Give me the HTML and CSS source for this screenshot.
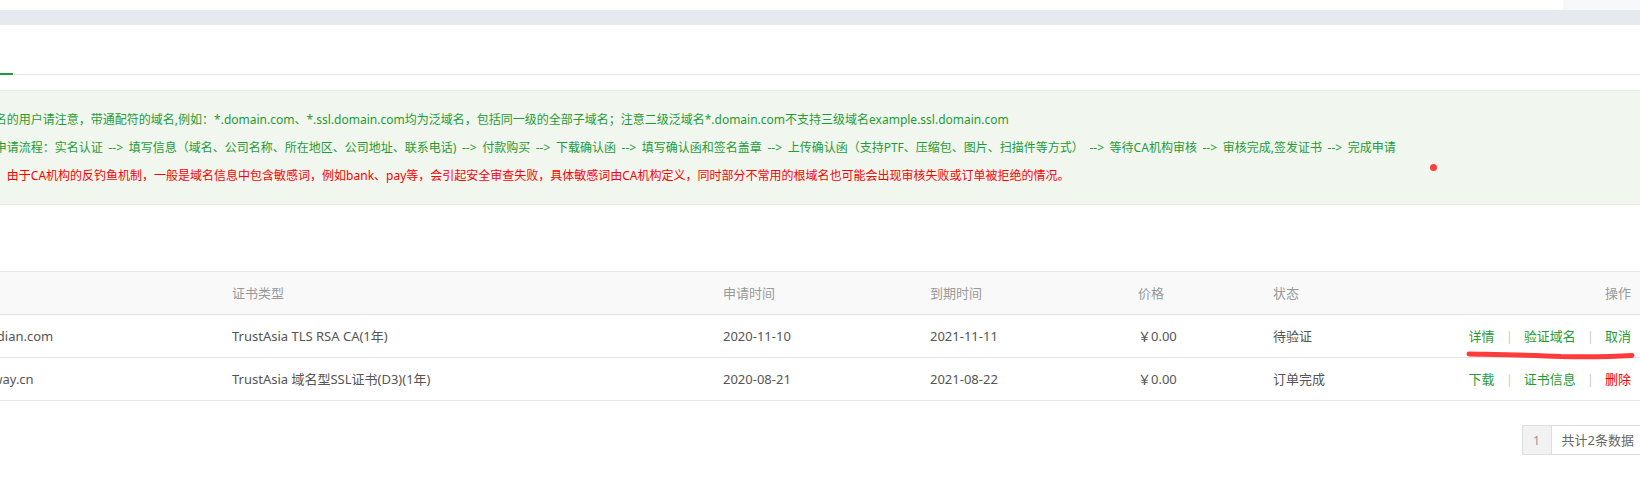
FILE: index.html
```html
<!DOCTYPE html>
<html lang="zh-CN">
<head>
  <meta charset="UTF-8" />
  <title>SSL证书</title>
  <link rel="stylesheet" href="styles.css">
</head>
<body>
  <!-- 顶部条 -->
  <div class="top-strip"><div class="corner"></div></div>
  <div class="nav-band"></div>

  <div class="page">
    <!-- 选项卡 -->
    <div class="tabs">
      <div class="tab">我的证书</div>
    </div>

    <!-- 提示框 -->
    <div class="notice">
      <p class="tip">1、泛域名的用户请注意，带通配符的域名,例如：*.domain.com、*.ssl.domain.com均为泛域名，包括同一级的全部子域名；注意二级泛域名*.domain.com不支持三级域名example.ssl.domain.com</p>
      <p class="tip">2、证书申请流程：实名认证 --&gt; 填写信息（域名、公司名称、所在地区、公司地址、联系电话) --&gt; 付款购买 --&gt; 下载确认函 --&gt; 填写确认函和签名盖章 --&gt; 上传确认函（支持PTF、压缩包、图片、扫描件等方式） --&gt; 等待CA机构审核 --&gt; 审核完成,签发证书 --&gt; 完成申请</p>
      <p class="tip warn">3、注意：由于CA机构的反钓鱼机制，一般是域名信息中包含敏感词，例如bank、pay等，会引起安全审查失败，具体敏感词由CA机构定义，同时部分不常用的根域名也可能会出现审核失败或订单被拒绝的情况。</p>
      <span class="mark-dot"></span>
    </div>

    <!-- 证书列表 -->
    <table class="cert-table">
      <colgroup>
        <col class="c-domain">
        <col class="c-type">
        <col class="c-date">
        <col class="c-date2">
        <col class="c-price">
        <col class="c-status">
        <col class="c-ops">
      </colgroup>
      <thead>
        <tr>
          <th class="first">域名</th>
          <th>证书类型</th>
          <th>申请时间</th>
          <th>到期时间</th>
          <th>价格</th>
          <th>状态</th>
          <th class="ops">操作</th>
        </tr>
      </thead>
      <tbody>
        <tr>
          <td class="first">www.haodian.com</td>
          <td>TrustAsia TLS RSA CA(1年)</td>
          <td>2020-11-10</td>
          <td>2021-11-11</td>
          <td>￥0.00</td>
          <td>待验证</td>
          <td class="ops">
            <span class="op-links">
              <a href="#">详情</a><span class="sep">|</span><a href="#">验证域名</a><span class="sep">|</span><a href="#">取消</a>
              <svg class="scribble" width="172" height="11" viewBox="0 0 172 11">
                <path d="M4,4 C30,4.5 70,5 96,6.5 C120,7 150,6.5 167,5.5" fill="none" stroke="#ff3b3b" stroke-width="5" stroke-linecap="round"/>
              </svg>
            </span>
          </td>
        </tr>
        <tr>
          <td class="first">www.baiway.cn</td>
          <td>TrustAsia 域名型SSL证书(D3)(1年)</td>
          <td>2020-08-21</td>
          <td>2021-08-22</td>
          <td>￥0.00</td>
          <td>订单完成</td>
          <td class="ops">
            <span class="op-links">
              <a href="#">下载</a><span class="sep">|</span><a href="#">证书信息</a><span class="sep">|</span><a href="#" class="danger">删除</a>
            </span>
          </td>
        </tr>
      </tbody>
    </table>

    <!-- 分页 -->
    <div class="pager">
      <span class="page-num">1</span>
      <span class="page-total">共计2条数据</span>
    </div>
  </div>
</body>
</html>
```

FILE: styles.css
```css
body {
  margin: 0;
  padding: 0;
  font-family: "Noto Sans", "Noto Sans CJK SC", sans-serif;
  font-size: 13px;
  color: #555;
  background: #fff;
  overflow: hidden;
}
a {
  text-decoration: none;
}

.top-strip {
  height: 10px;
  display: flex;
  justify-content: flex-end;
}
.top-strip .corner {
  width: 77px;
  background: #f7f8fa;
}
.nav-band {
  height: 15px;
  background: #e6e9ee;
}

/* 页面主体比窗口宽，左侧被卷走 */
.page {
  margin: 0 -10px 0 -80px;
}

.tabs {
  display: flex;
  border-bottom: 1px solid #e6e6e6;
}
.tab {
  width: 93px;
  line-height: 48px;
  text-align: center;
  color: #333;
  border-bottom: 2px solid #1e9c37;
  margin-bottom: -1px;
}

.notice {
  position: relative;
  margin-top: 15px;
  padding: 15px 0 14px 31px;
  background: #f1f6ee;
  border: 1px solid #e5ede1;
}
.tip {
  margin: 0;
  font-size: 12px;
  line-height: 28px;
  word-spacing: 2.5px;
  color: #1e9c37;
  white-space: nowrap;
}
.tip.warn {
  color: #f00;
}
.mark-dot {
  position: absolute;
  left: 1509px;
  top: 73px;
  width: 7px;
  height: 7px;
  border-radius: 50%;
  background: #ff3d3d;
}

.cert-table {
  width: 100%;
  margin-top: 66px;
  border-collapse: collapse;
  table-layout: fixed;
}
.c-domain { width: 302px; }
.c-type { width: 491px; }
.c-date { width: 207px; }
.c-date2 { width: 208px; }
.c-price { width: 135px; }
.c-status { width: 150px; }
.c-ops { width: 237px; }

.cert-table th,
.cert-table td {
  padding: 11px 10px;
  line-height: 20px;
  text-align: left;
  white-space: nowrap;
  border-bottom: 1px solid #e2e4e8;
}
.cert-table th {
  font-weight: normal;
  color: #999;
  background: #f9f9f9;
  border-top: 1px solid #e6e6e6;
  border-bottom-color: #dfe3e8;
}
.cert-table .first {
  padding-left: 20px;
}
.cert-table .ops {
  text-align: right;
  padding-right: 19px;
}
.op-links {
  position: relative;
  display: inline-block;
}
.op-links a {
  color: #1e9c37;
}
.op-links a.danger {
  color: #f00;
}
.op-links .sep {
  margin: 0 11px;
  color: #ccc;
}
.scribble {
  position: absolute;
  left: -4px;
  top: 24px;
}

.pager {
  display: flex;
  justify-content: flex-end;
  margin-top: 24px;
}
.pager span {
  height: 28px;
  line-height: 28px;
  border: 1px solid #ddd;
}
.page-num {
  width: 28px;
  text-align: center;
  color: #999;
  background: #f2f2f2;
}
.page-total {
  padding: 0 15px 0 10px;
  border-left: none !important;
  color: #666;
}
```
